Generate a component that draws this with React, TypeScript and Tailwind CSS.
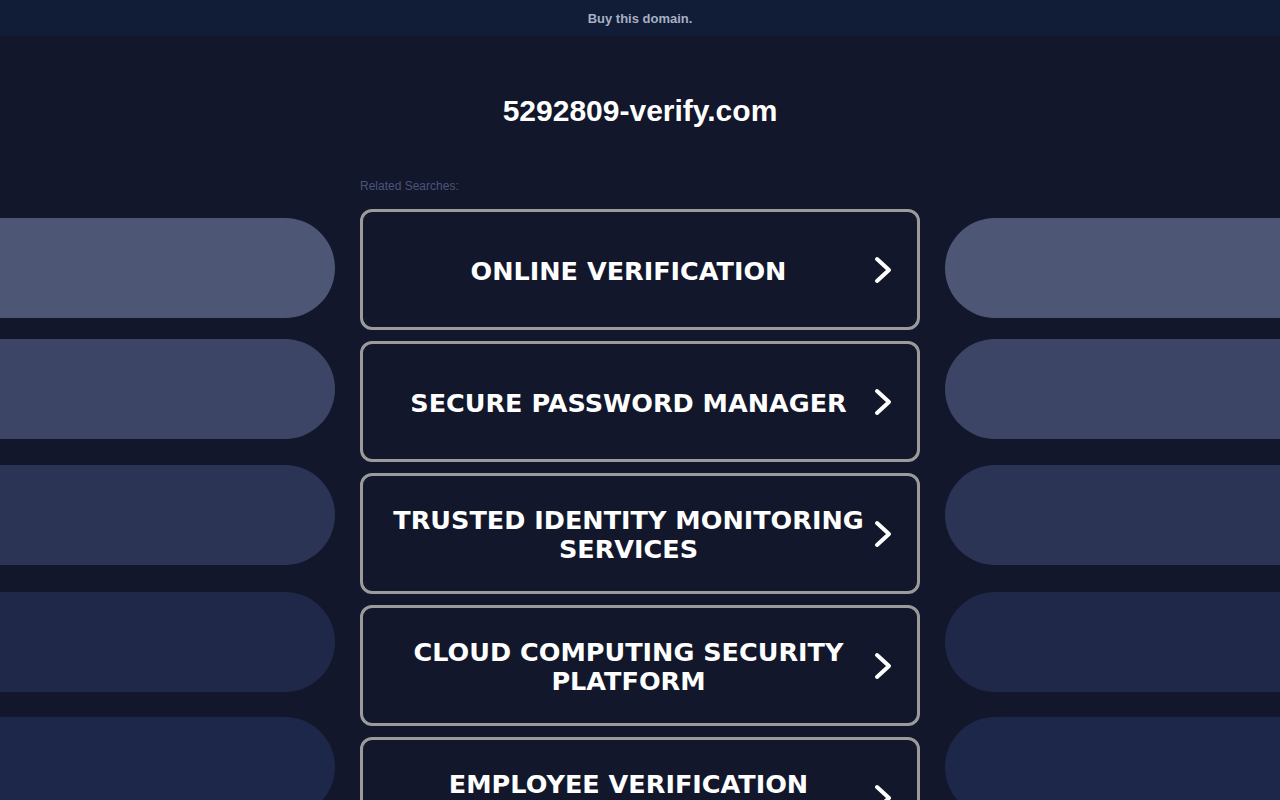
import { ReactNode } from 'react';

const SEARCHES = [
  'ONLINE VERIFICATION',
  'SECURE PASSWORD MANAGER',
  'TRUSTED IDENTITY MONITORING SERVICES',
  'CLOUD COMPUTING SECURITY PLATFORM',
  'EMPLOYEE VERIFICATION SERVICES',
];

// side pills: colour + top margin (first one has none)
const PILLS = [
  'bg-[#4d5674]',
  'mt-[21px] bg-[#3c4566]',
  'mt-[26px] bg-[#2b3454]',
  'mt-[27px] bg-[#1f2848]',
  'mt-[25px] bg-[#1d2749]',
];

function Chevron() {
  return (
    <svg width="18" height="28" viewBox="0 0 18 28" fill="none" className="shrink-0">
      <polyline
        points="3,3 15,14 3,25"
        stroke="white"
        strokeWidth="4"
        strokeLinecap="round"
        strokeLinejoin="round"
      />
    </svg>
  );
}

function SearchButton({ children }: { children: ReactNode }) {
  return (
    <a
      href="#"
      className="flex items-center h-[121px] rounded-[12px] border-[3px] border-[#9b9b9b] bg-[#12172b] pl-5 pr-[25px]"
    >
      <span className="flex-1 text-center text-white font-bold text-[25.5px] leading-[29px] pt-[3px] font-['DejaVu_Sans',Verdana,sans-serif]">
        {children}
      </span>
      <Chevron />
    </a>
  );
}

function PillColumn({ side }: { side: 'left' | 'right' }) {
  return (
    <div className="flex flex-col pt-[39px]">
      {PILLS.map((cls, i) => (
        <div
          key={i}
          className={`h-[100px] shrink-0 ${cls} ${side === 'left' ? 'rounded-r-full' : 'rounded-l-full'}`}
        />
      ))}
    </div>
  );
}

export default function App() {
  return (
    <div className="min-h-screen h-[800px] overflow-hidden bg-[#12172b] font-['Liberation_Sans',Arial,sans-serif]">
      {/* Top bar */}
      <div className="h-[36px] bg-[#111c37] flex items-center justify-center pt-[2px]">
        <a href="#" className="text-[13px] font-bold text-[#a6b0c3]">
          Buy this domain.
        </a>
      </div>

      {/* Title */}
      <h1 className="text-center text-white font-bold text-[30px] leading-[34px] pt-[58px]">
        5292809-verify.com
      </h1>

      <div className="grid grid-cols-[335px_560px_335px] gap-x-[25px] mt-[51px]">
        <PillColumn side="left" />

        <div className="flex flex-col">
          <p className="text-[12px] leading-[14px] text-[#4b5577] mb-[16px]">Related Searches:</p>
          <div className="flex flex-col gap-[11px]">
            {SEARCHES.map((s) => (
              <SearchButton key={s}>{s}</SearchButton>
            ))}
          </div>
        </div>

        <PillColumn side="right" />
      </div>
    </div>
  );
}
